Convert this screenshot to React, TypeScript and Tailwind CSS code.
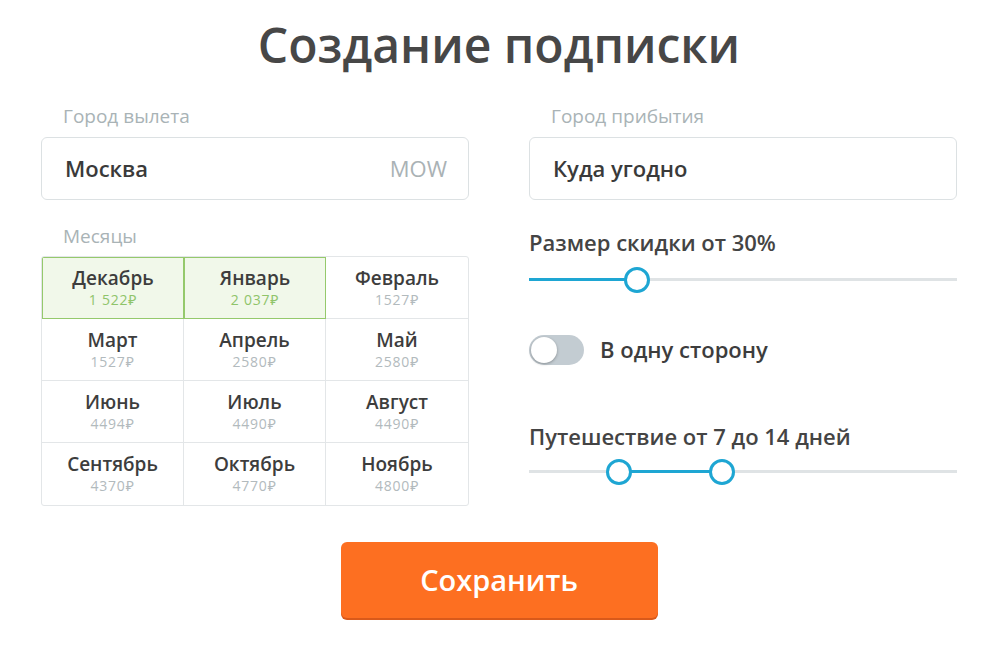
import { useState } from 'react';

const months = [
  { name: 'Декабрь', price: '1 522', active: true },
  { name: 'Январь', price: '2 037', active: true },
  { name: 'Февраль', price: '1527' },
  { name: 'Март', price: '1527' },
  { name: 'Апрель', price: '2580' },
  { name: 'Май', price: '2580' },
  { name: 'Июнь', price: '4494' },
  { name: 'Июль', price: '4490' },
  { name: 'Август', price: '4490' },
  { name: 'Сентябрь', price: '4370' },
  { name: 'Октябрь', price: '4770' },
  { name: 'Ноябрь', price: '4800' },
];

function Thumb() {
  return <div className="absolute top-1/2 w-[26px] h-[26px] -translate-x-1/2 -translate-y-1/2 rounded-full bg-white border-[3px] border-[#1ea6d3]" />;
}

export default function App() {
  const [oneWay, setOneWay] = useState(false);

  return (
    <div className="min-h-screen bg-white text-[#3d3d3d]" style={{ fontFamily: '"Open Sans", "Noto Sans", sans-serif' }}>
      <div className="w-[916px] ml-[41px] pt-[13px]">
        {/* Title */}
        <h1 className="text-center text-[48px] font-semibold leading-[64px] text-[#474747]">Создание подписки</h1>

        <div className="mt-[26px] grid grid-cols-2 gap-x-[60px]">
          {/* Left column */}
          <div>
            <div className="pl-[22px] text-[19px] leading-[26px] text-[#a9b3b6]">Город вылета</div>
            <div className="mt-[8px] h-[63px] rounded-[6px] border border-[#dce1e3] flex items-center justify-between pl-[23px] pr-[21px]">
              <span className="text-[22px] font-semibold text-[#3a3a3a]">Москва</span>
              <span className="text-[22px] text-[#aab2b5]">MOW</span>
            </div>

            <div className="mt-[23px] pl-[22px] text-[19px] leading-[26px] text-[#a9b3b6]">Месяцы</div>
            <div className="mt-[7px] grid grid-cols-3 border border-[#e3e6e8] rounded-[3px] overflow-hidden">
              {months.map((m, i) => (
                <div
                  key={m.name}
                  className={
                    'h-[62px] flex flex-col items-center justify-center ' +
                    (m.active
                      ? 'bg-[#f1f8ea] outline outline-[1.5px] -outline-offset-1 outline-[#95c96c] relative z-10'
                      : 'border-[#e3e6e8] ' + (i % 3 !== 2 ? 'border-r ' : '') + (i < 9 ? 'border-b' : ''))
                  }
                >
                  <span className="text-[19px] font-semibold leading-[24px] text-[#3d3d3d]">{m.name}</span>
                  <span className={'text-[14px] leading-[20px] tracking-[0.8px] ' + (m.active ? 'text-[#8fc46a]' : 'text-[#b2babd]')}>
                    {m.price}₽
                  </span>
                </div>
              ))}
            </div>
          </div>

          {/* Right column */}
          <div>
            <div className="pl-[22px] text-[19px] leading-[26px] text-[#a9b3b6]">Город прибытия</div>
            <div className="mt-[8px] h-[63px] rounded-[6px] border border-[#dce1e3] flex items-center pl-[23px]">
              <span className="text-[22px] font-semibold text-[#3a3a3a]">Куда угодно</span>
            </div>

            <div className="mt-[28px] text-[22px] font-semibold leading-[28px] text-[#444]">Размер скидки от 30%</div>
            <div className="relative mt-[22px] h-[3px] bg-[#dfe3e5]">
              <div className="absolute left-0 top-0 h-[3px] w-[108px] bg-[#1ea6d3]" />
              <div className="absolute left-[108px] top-1/2"><Thumb /></div>
            </div>

            <button onClick={() => setOneWay(!oneWay)} className="mt-[52px] flex items-center gap-[16px]">
              <span className={'relative w-[55px] h-[30px] rounded-full ' + (oneWay ? 'bg-[#1ea6d3]' : 'bg-[#c3ccd2]')}>
                <span className={'absolute top-[2px] w-[26px] h-[26px] rounded-full bg-white shadow-[0_1px_3px_rgba(0,0,0,0.3)] ' + (oneWay ? 'left-[27px]' : 'left-[2px]')} />
              </span>
              <span className="text-[22px] font-semibold text-[#3d3d3d]">В одну сторону</span>
            </button>

            <div className="mt-[56px] text-[22px] font-semibold leading-[28px] text-[#444]">Путешествие от 7 до 14 дней</div>
            <div className="relative mt-[20px] h-[3px] bg-[#dfe3e5]">
              <div className="absolute left-[90px] top-0 h-[3px] w-[103px] bg-[#1ea6d3]" />
              <div className="absolute left-[90px] top-1/2"><Thumb /></div>
              <div className="absolute left-[193px] top-1/2"><Thumb /></div>
            </div>
          </div>
        </div>

        <div className="mt-[36px] flex justify-center">
          <button className="w-[317px] h-[76px] rounded-[6px] bg-[#fd6f21] shadow-[0_2px_0_#d9591a] text-white text-[29px] font-semibold">
            Сохранить
          </button>
        </div>
      </div>
    </div>
  );
}
